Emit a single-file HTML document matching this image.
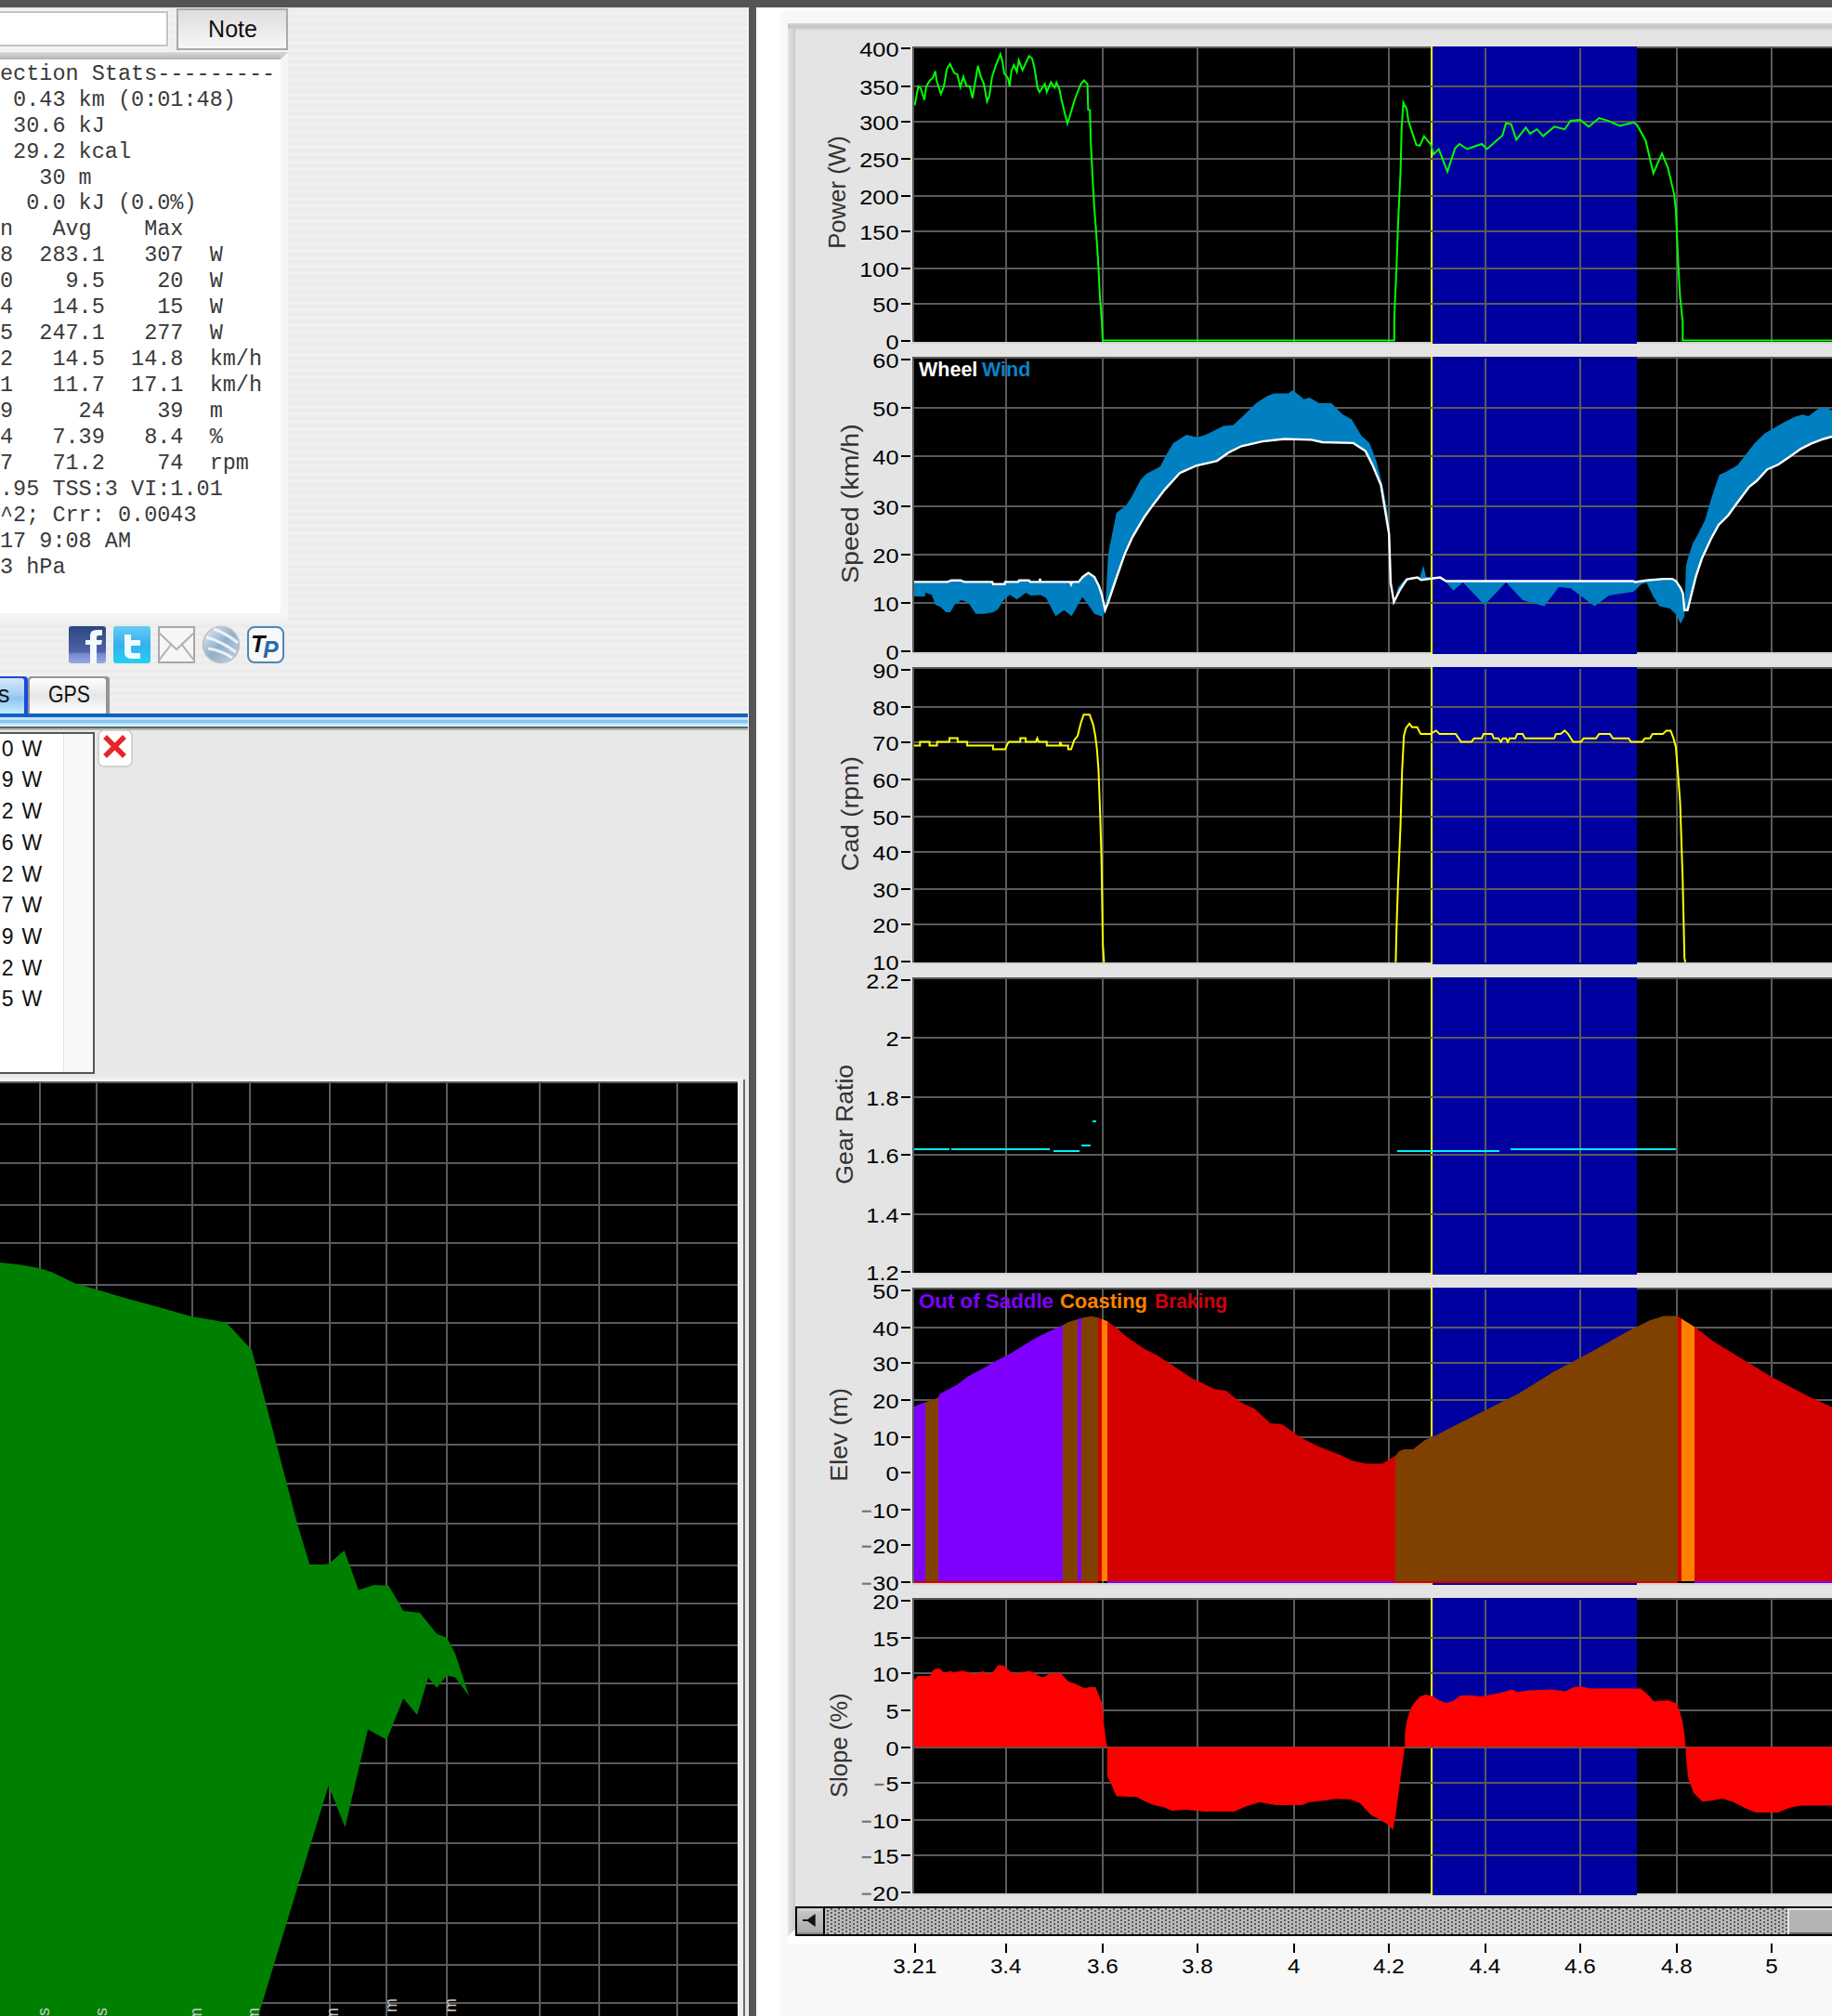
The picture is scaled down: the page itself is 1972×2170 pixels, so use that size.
<!DOCTYPE html>
<html><head><meta charset="utf-8">
<style>
html,body{margin:0;padding:0;}
body{width:1972px;height:2170px;overflow:hidden;position:relative;background:#f8f8f8;}
svg{position:absolute;left:0;top:0;}
text{font-family:"Liberation Sans",sans-serif;}
.mono{font-family:"Liberation Mono",monospace;white-space:pre;}
</style></head><body>
<svg width="1972" height="2170" viewBox="0 0 1972 2170" shape-rendering="crispEdges">
<defs>
<pattern id="stripes" x="0" y="8" width="8" height="8" patternUnits="userSpaceOnUse">
<rect x="0" y="0" width="8" height="4" fill="#ececec"/><rect x="0" y="4" width="8" height="4" fill="#f0f0f0"/>
</pattern>
<pattern id="dots" x="888" y="2054" width="8" height="4" patternUnits="userSpaceOnUse">
<rect x="0" y="0" width="8" height="4" fill="#bababa"/>
<rect x="2" y="2" width="2" height="2" fill="#5a5a5a"/><rect x="6" y="0" width="2" height="2" fill="#5a5a5a"/>
</pattern>
<linearGradient id="gBtn" x1="0" y1="0" x2="0" y2="1"><stop offset="0" stop-color="#dedede"/><stop offset="1" stop-color="#f7f7f7"/></linearGradient>
<linearGradient id="gShadow" x1="0" y1="0" x2="0" y2="1"><stop offset="0" stop-color="#dadada"/><stop offset="1" stop-color="#b2b2b2"/></linearGradient>
<linearGradient id="gTabSel" x1="0" y1="0" x2="0" y2="1"><stop offset="0" stop-color="#d4e8f8"/><stop offset="0.45" stop-color="#a8d0f0"/><stop offset="0.55" stop-color="#90c4ee"/><stop offset="1" stop-color="#c0ecff"/></linearGradient>
<linearGradient id="gTab" x1="0" y1="0" x2="0" y2="1"><stop offset="0" stop-color="#ffffff"/><stop offset="0.5" stop-color="#e6e6e6"/><stop offset="1" stop-color="#ffffff"/></linearGradient>
<linearGradient id="gFb" x1="0" y1="0" x2="0" y2="1"><stop offset="0" stop-color="#2d4680"/><stop offset="0.7" stop-color="#4d64a6"/><stop offset="0.74" stop-color="#7888cc"/><stop offset="1" stop-color="#98a8e4"/></linearGradient>
<linearGradient id="gTw" x1="0" y1="0" x2="0" y2="1"><stop offset="0" stop-color="#66ccf4"/><stop offset="0.5" stop-color="#35b0ee"/><stop offset="1" stop-color="#22d0f0"/></linearGradient>
<linearGradient id="gGlobe" x1="0" y1="0" x2="1" y2="1"><stop offset="0" stop-color="#e8f0f8"/><stop offset="0.5" stop-color="#8eb0cc"/><stop offset="1" stop-color="#c8d4e0"/></linearGradient>
<linearGradient id="gArrowBtn" x1="0" y1="0" x2="0" y2="1"><stop offset="0" stop-color="#c8c8c8"/><stop offset="1" stop-color="#a8a8a8"/></linearGradient>
<linearGradient id="gPanelL" x1="0" y1="0" x2="1" y2="0"><stop offset="0" stop-color="#e6e6e6"/><stop offset="1" stop-color="#c8c8c8"/></linearGradient>
<linearGradient id="gPanelT" x1="0" y1="0" x2="0" y2="1"><stop offset="0" stop-color="#d8d8d8"/><stop offset="0.5" stop-color="#c4c4c4"/><stop offset="1" stop-color="#d6d6d6"/></linearGradient>
</defs>

<rect x="0" y="8" width="806" height="760" fill="url(#stripes)"/>
<rect x="0" y="786" width="806" height="1384" fill="#e8e8e8"/>
<rect x="-10" y="10" width="193" height="43" fill="#f4f4f4"/>
<rect x="-10" y="12" width="191" height="38" fill="#c4c4c4"/>
<rect x="-10" y="14" width="189" height="34" fill="#ffffff"/>
<rect x="190" y="9" width="120" height="45" fill="#aaaaaa"/>
<rect x="192" y="11" width="116" height="41" fill="url(#gBtn)"/>
<text x="250.5" y="39.8" font-size="25" text-anchor="middle" fill="#111">Note</text>
<rect x="-10" y="55" width="320" height="613" fill="#f5f5f5"/>
<rect x="-10" y="56" width="312" height="8" fill="url(#gShadow)"/>
<polygon points="302,56 310,56 302,64" fill="#cfcfcf" shape-rendering="auto"/>
<rect x="-10" y="64" width="312" height="596" fill="#ffffff"/>
<g shape-rendering="auto">
<text class="mono" x="0" y="85.8" font-size="23.5" fill="#3a3a3a">ection Stats---------</text>
<text class="mono" x="0" y="113.7" font-size="23.5" fill="#3a3a3a"> 0.43 km (0:01:48)</text>
<text class="mono" x="0" y="141.7" font-size="23.5" fill="#3a3a3a"> 30.6 kJ</text>
<text class="mono" x="0" y="169.6" font-size="23.5" fill="#3a3a3a"> 29.2 kcal</text>
<text class="mono" x="0" y="197.5" font-size="23.5" fill="#3a3a3a">   30 m</text>
<text class="mono" x="0" y="225.4" font-size="23.5" fill="#3a3a3a">  0.0 kJ (0.0%)</text>
<text class="mono" x="0" y="253.4" font-size="23.5" fill="#3a3a3a">n   Avg    Max</text>
<text class="mono" x="0" y="281.3" font-size="23.5" fill="#3a3a3a">8  283.1   307  W</text>
<text class="mono" x="0" y="309.2" font-size="23.5" fill="#3a3a3a">0    9.5    20  W</text>
<text class="mono" x="0" y="337.2" font-size="23.5" fill="#3a3a3a">4   14.5    15  W</text>
<text class="mono" x="0" y="365.1" font-size="23.5" fill="#3a3a3a">5  247.1   277  W</text>
<text class="mono" x="0" y="393.0" font-size="23.5" fill="#3a3a3a">2   14.5  14.8  km/h</text>
<text class="mono" x="0" y="421.0" font-size="23.5" fill="#3a3a3a">1   11.7  17.1  km/h</text>
<text class="mono" x="0" y="448.9" font-size="23.5" fill="#3a3a3a">9     24    39  m</text>
<text class="mono" x="0" y="476.8" font-size="23.5" fill="#3a3a3a">4   7.39   8.4  %</text>
<text class="mono" x="0" y="504.8" font-size="23.5" fill="#3a3a3a">7   71.2    74  rpm</text>
<text class="mono" x="0" y="532.7" font-size="23.5" fill="#3a3a3a">.95 TSS:3 VI:1.01</text>
<text class="mono" x="0" y="560.6" font-size="23.5" fill="#3a3a3a">^2; Crr: 0.0043</text>
<text class="mono" x="0" y="588.5" font-size="23.5" fill="#3a3a3a">17 9:08 AM</text>
<text class="mono" x="0" y="616.5" font-size="23.5" fill="#3a3a3a">3 hPa</text>
</g>
<g shape-rendering="auto">
<rect x="74" y="674" width="40" height="40" rx="3" fill="url(#gFb)"/>
<path d="M97 714 V694 H92 V689 H97 V684 Q97 678 104 678 H110 V684 H106 Q104 684 104 686 V689 H110 L109 694 H104 V714 Z" fill="#f4f8ff"/>
<rect x="122" y="674" width="40" height="40" rx="3" fill="url(#gTw)"/>
<path d="M134 683 H141 V689 H151 V695 H141 V701 Q141 703 143 703 H151 V709 H141 Q134 709 134 702 Z" fill="#f0fbff"/>
<rect x="171" y="675" width="38" height="38" fill="#f6f6f6" stroke="#a8a8a8" stroke-width="2"/>
<path d="M171 681 L190 699 L209 681 M171 711 L184 694 M209 711 L196 694" fill="none" stroke="#b0b0b0" stroke-width="2"/>
<circle cx="238" cy="694" r="19.5" fill="url(#gGlobe)" stroke="#c0c0c0" stroke-width="1.5"/>
<path d="M222 686 Q238 690 254 702 M224 698 Q238 700 250 708 M230 677 Q244 682 256 692" fill="none" stroke="#ffffff" stroke-width="3" opacity="0.8"/>
<rect x="267" y="675" width="38" height="38" rx="7" fill="#f8f8f8" stroke="#4a88b8" stroke-width="2"/>
<text x="270" y="702" font-size="25" font-weight="bold" font-style="italic" fill="#111">T</text>
<text x="283" y="708" font-size="25" font-weight="bold" font-style="italic" fill="#2a6aa8">P</text>
</g>
<path d="M-4 768 V728 H26 Q30 728 30 732 V768 Z" fill="#1a4ad8" shape-rendering="auto"/>
<path d="M-4 768 V730 H23 Q26 730 26 733 V768 Z" fill="url(#gTabSel)" shape-rendering="auto"/>
<text x="10.5" y="755.8" font-size="26" text-anchor="end" fill="#111">s</text>
<path d="M30 768 V732 Q30 728 34 728 H114 Q118 728 118 732 V768 Z" fill="#959595" shape-rendering="auto"/>
<path d="M32 768 V733 Q32 730 35 730 H111 Q114 730 114 733 V768 Z" fill="url(#gTab)" shape-rendering="auto"/>
<text x="74.5" y="755.8" font-size="26.5" text-anchor="middle" fill="#111" textLength="45" lengthAdjust="spacingAndGlyphs">GPS</text>
<rect x="0" y="768" width="806" height="4" fill="#0f62bf"/>
<rect x="0" y="772" width="806" height="3" fill="#c8e0f6"/>
<rect x="0" y="775" width="806" height="3" fill="#8cc2ee"/>
<rect x="0" y="778" width="806" height="2" fill="#aee0ff"/>
<rect x="0" y="780" width="806" height="2" fill="#d0f6ff"/>
<rect x="0" y="782" width="806" height="2" fill="#646464"/>
<rect x="0" y="784" width="806" height="2" fill="#b4b4b4"/>
<rect x="-10" y="788" width="112" height="368" fill="#555555"/>
<rect x="-10" y="790" width="110" height="364" fill="#ffffff"/>
<rect x="68" y="790" width="32" height="364" fill="#f8f8f8"/>
<rect x="68" y="790" width="1" height="364" fill="#e2e2e2"/>
<g shape-rendering="auto">
<text x="14.5" y="813.7" font-size="23" text-anchor="end" fill="#111">0</text>
<text x="23.5" y="813.7" font-size="23" fill="#111">W</text>
<text x="14.5" y="847.4" font-size="23" text-anchor="end" fill="#111">9</text>
<text x="23.5" y="847.4" font-size="23" fill="#111">W</text>
<text x="14.5" y="881.1" font-size="23" text-anchor="end" fill="#111">2</text>
<text x="23.5" y="881.1" font-size="23" fill="#111">W</text>
<text x="14.5" y="914.8" font-size="23" text-anchor="end" fill="#111">6</text>
<text x="23.5" y="914.8" font-size="23" fill="#111">W</text>
<text x="14.5" y="948.5" font-size="23" text-anchor="end" fill="#111">2</text>
<text x="23.5" y="948.5" font-size="23" fill="#111">W</text>
<text x="14.5" y="982.2" font-size="23" text-anchor="end" fill="#111">7</text>
<text x="23.5" y="982.2" font-size="23" fill="#111">W</text>
<text x="14.5" y="1015.9" font-size="23" text-anchor="end" fill="#111">9</text>
<text x="23.5" y="1015.9" font-size="23" fill="#111">W</text>
<text x="14.5" y="1049.6" font-size="23" text-anchor="end" fill="#111">2</text>
<text x="23.5" y="1049.6" font-size="23" fill="#111">W</text>
<text x="14.5" y="1083.3" font-size="23" text-anchor="end" fill="#111">5</text>
<text x="23.5" y="1083.3" font-size="23" fill="#111">W</text>
</g>
<g shape-rendering="auto">
<rect x="106" y="786" width="36" height="39" rx="6" fill="#ffffff" stroke="#c8c8c8" stroke-width="1.5"/>
<path d="M115 795 L132 812 M132 795 L115 812" stroke="#e8242c" stroke-width="5.5" stroke-linecap="square"/>
</g>
<rect x="0" y="1160" width="800" height="6" fill="#f2f2f2"/>
<rect x="794" y="1160" width="6" height="1010" fill="#efefef"/>
<rect x="800" y="1162" width="2" height="1008" fill="#6a6a6a"/>
<rect x="0" y="1164" width="794" height="2" fill="#5a5a5a"/>
<rect x="0" y="1166" width="794" height="1004" fill="#000"/>
<rect x="41.5" y="1166" width="2" height="1004" fill="#5a5a5a"/>
<rect x="103.3" y="1166" width="2" height="1004" fill="#5a5a5a"/>
<rect x="205.8" y="1166" width="2" height="1004" fill="#5a5a5a"/>
<rect x="267.6" y="1166" width="2" height="1004" fill="#5a5a5a"/>
<rect x="353.5" y="1166" width="2" height="1004" fill="#5a5a5a"/>
<rect x="415.3" y="1166" width="2" height="1004" fill="#5a5a5a"/>
<rect x="479.7" y="1166" width="2" height="1004" fill="#5a5a5a"/>
<rect x="579.6" y="1166" width="2" height="1004" fill="#5a5a5a"/>
<rect x="643.6" y="1166" width="2" height="1004" fill="#5a5a5a"/>
<rect x="727.7" y="1166" width="2" height="1004" fill="#5a5a5a"/>
<rect x="0" y="1209.3" width="794" height="2" fill="#5a5a5a"/>
<rect x="0" y="1251.4" width="794" height="2" fill="#5a5a5a"/>
<rect x="0" y="1295.7" width="794" height="2" fill="#5a5a5a"/>
<rect x="0" y="1337.3" width="794" height="2" fill="#5a5a5a"/>
<rect x="0" y="1381.6" width="794" height="2" fill="#5a5a5a"/>
<rect x="0" y="1423.2" width="794" height="2" fill="#5a5a5a"/>
<rect x="0" y="1467.6" width="794" height="2" fill="#5a5a5a"/>
<rect x="0" y="1509.6" width="794" height="2" fill="#5a5a5a"/>
<rect x="0" y="1554.0" width="794" height="2" fill="#5a5a5a"/>
<rect x="0" y="1595.6" width="794" height="2" fill="#5a5a5a"/>
<rect x="0" y="1639.2" width="794" height="2" fill="#5a5a5a"/>
<rect x="0" y="1683.8" width="794" height="2" fill="#5a5a5a"/>
<rect x="0" y="1725.4" width="794" height="2" fill="#5a5a5a"/>
<rect x="0" y="1769.7" width="794" height="2" fill="#5a5a5a"/>
<rect x="0" y="1811.3" width="794" height="2" fill="#5a5a5a"/>
<rect x="0" y="1855.6" width="794" height="2" fill="#5a5a5a"/>
<rect x="0" y="1897.3" width="794" height="2" fill="#5a5a5a"/>
<rect x="0" y="1941.6" width="794" height="2" fill="#5a5a5a"/>
<rect x="0" y="1983.2" width="794" height="2" fill="#5a5a5a"/>
<rect x="0" y="2027.5" width="794" height="2" fill="#5a5a5a"/>
<rect x="0" y="2069.2" width="794" height="2" fill="#5a5a5a"/>
<rect x="0" y="2113.5" width="794" height="2" fill="#5a5a5a"/>
<rect x="0" y="2155.0" width="794" height="2" fill="#5a5a5a"/>
<polygon points="0.0,1359.0 20.0,1361.0 42.0,1365.0 55.0,1369.0 80.0,1381.0 104.0,1388.0 134.0,1397.0 160.0,1404.0 206.0,1417.0 230.0,1421.0 244.0,1424.0 271.0,1453.0 320.0,1640.0 333.5,1684.8 353.6,1683.4 370.6,1669.0 385.9,1711.6 402.9,1706.0 418.5,1707.0 434.2,1734.0 452.0,1736.0 470.0,1758.6 481.2,1763.0 490.0,1780.0 505.0,1825.8 490.0,1805.6 481.0,1803.4 470.0,1816.8 461.0,1805.6 449.0,1846.0 434.2,1828.0 416.3,1872.8 396.0,1861.6 371.5,1966.8 353.6,1922.0 278.0,2170.0 0.0,2170.0" fill="#008000" shape-rendering="auto"/>
<g fill="#c8c8c8" shape-rendering="auto">
<text x="53" y="2170" font-size="18" transform="rotate(-90 53 2170)">s</text>
<text x="115" y="2170" font-size="18" transform="rotate(-90 115 2170)">s</text>
<text x="217" y="2176" font-size="18" transform="rotate(-90 217 2176)">m</text>
<text x="279" y="2176" font-size="18" transform="rotate(-90 279 2176)">m</text>
<text x="364" y="2176" font-size="18" transform="rotate(-90 364 2176)">m</text>
<text x="427" y="2166" font-size="18" transform="rotate(-90 427 2166)">m</text>
<text x="491" y="2166" font-size="18" transform="rotate(-90 491 2166)">m</text>
</g>
<rect x="0" y="0" width="1972" height="8" fill="#545454"/>
<rect x="805" y="8" width="1" height="2162" fill="#fafafa"/>
<rect x="806" y="8" width="8" height="2162" fill="#555555"/>
<rect x="814" y="8" width="1158" height="2162" fill="#ffffff"/>
<rect x="840" y="12" width="1132" height="2158" fill="#f8f8f8"/>
<rect x="848" y="25" width="1124" height="2059" fill="#e4e4e4"/>
<rect x="848" y="25" width="8" height="2059" fill="url(#gPanelL)"/>
<rect x="848" y="25" width="1124" height="7" fill="url(#gPanelT)"/>
<polygon points="848,2084 856,2076 856,2084" fill="#ffffff"/>
<rect x="848" y="2084" width="1124" height="8" fill="#ffffff"/>
<rect x="982" y="367.8" width="990" height="2" fill="#d4d4d4"/>
<rect x="982" y="50.4" width="990" height="2" fill="#5a5a5a"/>
<rect x="982" y="50.4" width="2" height="317.4" fill="#5a5a5a"/>
<rect x="984" y="52.4" width="988" height="315.4" fill="#000"/>
<rect x="1541.5" y="50.4" width="220.5" height="319.4" fill="#0000a0"/>
<rect x="1540" y="50.4" width="2" height="319.4" fill="#ffff00"/>
<rect x="1081.7" y="52.4" width="2" height="315.4" fill="#5a5a5a"/>
<rect x="1185.8" y="52.4" width="2" height="315.4" fill="#5a5a5a"/>
<rect x="1287.9" y="52.4" width="2" height="315.4" fill="#5a5a5a"/>
<rect x="1391.8" y="52.4" width="2" height="315.4" fill="#5a5a5a"/>
<rect x="1493.8" y="52.4" width="2" height="315.4" fill="#5a5a5a"/>
<rect x="1597.5" y="52.4" width="2" height="315.4" fill="#5a5a5a"/>
<rect x="1699.9" y="52.4" width="2" height="315.4" fill="#5a5a5a"/>
<rect x="1803.9" y="52.4" width="2" height="315.4" fill="#5a5a5a"/>
<rect x="1905.9" y="52.4" width="2" height="315.4" fill="#5a5a5a"/>
<rect x="984" y="91.8" width="988" height="2" fill="#5a5a5a"/>
<rect x="984" y="129.8" width="988" height="2" fill="#5a5a5a"/>
<rect x="984" y="169.7" width="988" height="2" fill="#5a5a5a"/>
<rect x="984" y="209.8" width="988" height="2" fill="#5a5a5a"/>
<rect x="984" y="247.7" width="988" height="2" fill="#5a5a5a"/>
<rect x="984" y="287.9" width="988" height="2" fill="#5a5a5a"/>
<rect x="984" y="325.8" width="988" height="2" fill="#5a5a5a"/>
<rect x="970" y="51.4" width="10" height="2" fill="#000"/>
<rect x="970" y="91.8" width="10" height="2" fill="#000"/>
<rect x="970" y="129.8" width="10" height="2" fill="#000"/>
<rect x="970" y="169.7" width="10" height="2" fill="#000"/>
<rect x="970" y="209.8" width="10" height="2" fill="#000"/>
<rect x="970" y="247.7" width="10" height="2" fill="#000"/>
<rect x="970" y="287.9" width="10" height="2" fill="#000"/>
<rect x="970" y="325.8" width="10" height="2" fill="#000"/>
<rect x="970" y="366.2" width="10" height="2" fill="#000"/>
<text x="0" y="0" font-size="26" text-anchor="middle" fill="#333" transform="translate(909.9 207.0) rotate(-90)" textLength="121.7" lengthAdjust="spacingAndGlyphs" shape-rendering="auto">Power (W)</text>
<rect x="982" y="701.6" width="990" height="2" fill="#d4d4d4"/>
<rect x="982" y="384.2" width="990" height="2" fill="#5a5a5a"/>
<rect x="982" y="384.2" width="2" height="317.4" fill="#5a5a5a"/>
<rect x="984" y="386.2" width="988" height="315.4" fill="#000"/>
<rect x="1541.5" y="384.2" width="220.5" height="319.4" fill="#0000a0"/>
<rect x="1540" y="384.2" width="2" height="319.4" fill="#ffff00"/>
<rect x="1081.7" y="386.2" width="2" height="315.4" fill="#5a5a5a"/>
<rect x="1185.8" y="386.2" width="2" height="315.4" fill="#5a5a5a"/>
<rect x="1287.9" y="386.2" width="2" height="315.4" fill="#5a5a5a"/>
<rect x="1391.8" y="386.2" width="2" height="315.4" fill="#5a5a5a"/>
<rect x="1493.8" y="386.2" width="2" height="315.4" fill="#5a5a5a"/>
<rect x="1597.5" y="386.2" width="2" height="315.4" fill="#5a5a5a"/>
<rect x="1699.9" y="386.2" width="2" height="315.4" fill="#5a5a5a"/>
<rect x="1803.9" y="386.2" width="2" height="315.4" fill="#5a5a5a"/>
<rect x="1905.9" y="386.2" width="2" height="315.4" fill="#5a5a5a"/>
<rect x="984" y="437.6" width="988" height="2" fill="#5a5a5a"/>
<rect x="984" y="489.8" width="988" height="2" fill="#5a5a5a"/>
<rect x="984" y="543.6" width="988" height="2" fill="#5a5a5a"/>
<rect x="984" y="596.0" width="988" height="2" fill="#5a5a5a"/>
<rect x="984" y="648.0" width="988" height="2" fill="#5a5a5a"/>
<rect x="970" y="385.6" width="10" height="2" fill="#000"/>
<rect x="970" y="437.6" width="10" height="2" fill="#000"/>
<rect x="970" y="489.8" width="10" height="2" fill="#000"/>
<rect x="970" y="543.6" width="10" height="2" fill="#000"/>
<rect x="970" y="596.0" width="10" height="2" fill="#000"/>
<rect x="970" y="648.0" width="10" height="2" fill="#000"/>
<rect x="970" y="700.3" width="10" height="2" fill="#000"/>
<text x="0" y="0" font-size="26" text-anchor="middle" fill="#333" transform="translate(924.1 542.2) rotate(-90)" textLength="171.8" lengthAdjust="spacingAndGlyphs" shape-rendering="auto">Speed (km/h)</text>
<rect x="982" y="1035.8" width="990" height="2" fill="#d4d4d4"/>
<rect x="982" y="718.0" width="990" height="2" fill="#5a5a5a"/>
<rect x="982" y="718.0" width="2" height="317.8" fill="#5a5a5a"/>
<rect x="984" y="720.0" width="988" height="315.8" fill="#000"/>
<rect x="1541.5" y="718.0" width="220.5" height="319.8" fill="#0000a0"/>
<rect x="1540" y="718.0" width="2" height="319.8" fill="#ffff00"/>
<rect x="1081.7" y="720.0" width="2" height="315.8" fill="#5a5a5a"/>
<rect x="1185.8" y="720.0" width="2" height="315.8" fill="#5a5a5a"/>
<rect x="1287.9" y="720.0" width="2" height="315.8" fill="#5a5a5a"/>
<rect x="1391.8" y="720.0" width="2" height="315.8" fill="#5a5a5a"/>
<rect x="1493.8" y="720.0" width="2" height="315.8" fill="#5a5a5a"/>
<rect x="1597.5" y="720.0" width="2" height="315.8" fill="#5a5a5a"/>
<rect x="1699.9" y="720.0" width="2" height="315.8" fill="#5a5a5a"/>
<rect x="1803.9" y="720.0" width="2" height="315.8" fill="#5a5a5a"/>
<rect x="1905.9" y="720.0" width="2" height="315.8" fill="#5a5a5a"/>
<rect x="984" y="760.0" width="988" height="2" fill="#5a5a5a"/>
<rect x="984" y="797.9" width="988" height="2" fill="#5a5a5a"/>
<rect x="984" y="837.7" width="988" height="2" fill="#5a5a5a"/>
<rect x="984" y="877.7" width="988" height="2" fill="#5a5a5a"/>
<rect x="984" y="916.1" width="988" height="2" fill="#5a5a5a"/>
<rect x="984" y="956.0" width="988" height="2" fill="#5a5a5a"/>
<rect x="984" y="994.1" width="988" height="2" fill="#5a5a5a"/>
<rect x="970" y="719.5" width="10" height="2" fill="#000"/>
<rect x="970" y="760.0" width="10" height="2" fill="#000"/>
<rect x="970" y="797.9" width="10" height="2" fill="#000"/>
<rect x="970" y="837.7" width="10" height="2" fill="#000"/>
<rect x="970" y="877.7" width="10" height="2" fill="#000"/>
<rect x="970" y="916.1" width="10" height="2" fill="#000"/>
<rect x="970" y="956.0" width="10" height="2" fill="#000"/>
<rect x="970" y="994.1" width="10" height="2" fill="#000"/>
<rect x="970" y="1033.9" width="10" height="2" fill="#000"/>
<text x="0" y="0" font-size="26" text-anchor="middle" fill="#333" transform="translate(924.1 875.9) rotate(-90)" textLength="123.5" lengthAdjust="spacingAndGlyphs" shape-rendering="auto">Cad (rpm)</text>
<rect x="982" y="1369.7" width="990" height="2" fill="#d4d4d4"/>
<rect x="982" y="1051.9" width="990" height="2" fill="#5a5a5a"/>
<rect x="982" y="1051.9" width="2" height="317.8" fill="#5a5a5a"/>
<rect x="984" y="1053.9" width="988" height="315.8" fill="#000"/>
<rect x="1541.5" y="1051.9" width="220.5" height="319.8" fill="#0000a0"/>
<rect x="1540" y="1051.9" width="2" height="319.8" fill="#ffff00"/>
<rect x="1081.7" y="1053.9" width="2" height="315.8" fill="#5a5a5a"/>
<rect x="1185.8" y="1053.9" width="2" height="315.8" fill="#5a5a5a"/>
<rect x="1287.9" y="1053.9" width="2" height="315.8" fill="#5a5a5a"/>
<rect x="1391.8" y="1053.9" width="2" height="315.8" fill="#5a5a5a"/>
<rect x="1493.8" y="1053.9" width="2" height="315.8" fill="#5a5a5a"/>
<rect x="1597.5" y="1053.9" width="2" height="315.8" fill="#5a5a5a"/>
<rect x="1699.9" y="1053.9" width="2" height="315.8" fill="#5a5a5a"/>
<rect x="1803.9" y="1053.9" width="2" height="315.8" fill="#5a5a5a"/>
<rect x="1905.9" y="1053.9" width="2" height="315.8" fill="#5a5a5a"/>
<rect x="984" y="1115.8" width="988" height="2" fill="#5a5a5a"/>
<rect x="984" y="1179.5" width="988" height="2" fill="#5a5a5a"/>
<rect x="984" y="1241.8" width="988" height="2" fill="#5a5a5a"/>
<rect x="984" y="1305.6" width="988" height="2" fill="#5a5a5a"/>
<rect x="970" y="1053.8" width="10" height="2" fill="#000"/>
<rect x="970" y="1115.8" width="10" height="2" fill="#000"/>
<rect x="970" y="1179.5" width="10" height="2" fill="#000"/>
<rect x="970" y="1241.8" width="10" height="2" fill="#000"/>
<rect x="970" y="1305.6" width="10" height="2" fill="#000"/>
<rect x="970" y="1367.6" width="10" height="2" fill="#000"/>
<text x="0" y="0" font-size="26" text-anchor="middle" fill="#333" transform="translate(918.4 1210.3) rotate(-90)" textLength="129.0" lengthAdjust="spacingAndGlyphs" shape-rendering="auto">Gear Ratio</text>
<rect x="982" y="1703.6" width="990" height="2" fill="#d4d4d4"/>
<rect x="982" y="1385.8" width="990" height="2" fill="#5a5a5a"/>
<rect x="982" y="1385.8" width="2" height="317.8" fill="#5a5a5a"/>
<rect x="984" y="1387.8" width="988" height="315.8" fill="#000"/>
<rect x="1541.5" y="1385.8" width="220.5" height="319.8" fill="#0000a0"/>
<rect x="1540" y="1385.8" width="2" height="319.8" fill="#ffff00"/>
<rect x="1081.7" y="1387.8" width="2" height="315.8" fill="#5a5a5a"/>
<rect x="1185.8" y="1387.8" width="2" height="315.8" fill="#5a5a5a"/>
<rect x="1287.9" y="1387.8" width="2" height="315.8" fill="#5a5a5a"/>
<rect x="1391.8" y="1387.8" width="2" height="315.8" fill="#5a5a5a"/>
<rect x="1493.8" y="1387.8" width="2" height="315.8" fill="#5a5a5a"/>
<rect x="1597.5" y="1387.8" width="2" height="315.8" fill="#5a5a5a"/>
<rect x="1699.9" y="1387.8" width="2" height="315.8" fill="#5a5a5a"/>
<rect x="1803.9" y="1387.8" width="2" height="315.8" fill="#5a5a5a"/>
<rect x="1905.9" y="1387.8" width="2" height="315.8" fill="#5a5a5a"/>
<rect x="984" y="1427.8" width="988" height="2" fill="#5a5a5a"/>
<rect x="984" y="1465.7" width="988" height="2" fill="#5a5a5a"/>
<rect x="984" y="1505.7" width="988" height="2" fill="#5a5a5a"/>
<rect x="984" y="1545.7" width="988" height="2" fill="#5a5a5a"/>
<rect x="984" y="1583.7" width="988" height="2" fill="#5a5a5a"/>
<rect x="984" y="1623.7" width="988" height="2" fill="#5a5a5a"/>
<rect x="984" y="1661.6" width="988" height="2" fill="#5a5a5a"/>
<rect x="970" y="1387.6" width="10" height="2" fill="#000"/>
<rect x="970" y="1427.8" width="10" height="2" fill="#000"/>
<rect x="970" y="1465.7" width="10" height="2" fill="#000"/>
<rect x="970" y="1505.7" width="10" height="2" fill="#000"/>
<rect x="970" y="1545.7" width="10" height="2" fill="#000"/>
<rect x="970" y="1583.7" width="10" height="2" fill="#000"/>
<rect x="970" y="1623.7" width="10" height="2" fill="#000"/>
<rect x="970" y="1661.6" width="10" height="2" fill="#000"/>
<rect x="970" y="1701.6" width="10" height="2" fill="#000"/>
<text x="0" y="0" font-size="26" text-anchor="middle" fill="#333" transform="translate(911.9 1544.4) rotate(-90)" textLength="100.9" lengthAdjust="spacingAndGlyphs" shape-rendering="auto">Elev (m)</text>
<rect x="982" y="2037.5" width="990" height="2" fill="#d4d4d4"/>
<rect x="982" y="1719.6" width="990" height="2" fill="#5a5a5a"/>
<rect x="982" y="1719.6" width="2" height="317.9" fill="#5a5a5a"/>
<rect x="984" y="1721.6" width="988" height="315.9" fill="#000"/>
<rect x="1541.5" y="1719.6" width="220.5" height="319.9" fill="#0000a0"/>
<rect x="1540" y="1719.6" width="2" height="319.9" fill="#ffff00"/>
<rect x="1081.7" y="1721.6" width="2" height="315.9" fill="#5a5a5a"/>
<rect x="1185.8" y="1721.6" width="2" height="315.9" fill="#5a5a5a"/>
<rect x="1287.9" y="1721.6" width="2" height="315.9" fill="#5a5a5a"/>
<rect x="1391.8" y="1721.6" width="2" height="315.9" fill="#5a5a5a"/>
<rect x="1493.8" y="1721.6" width="2" height="315.9" fill="#5a5a5a"/>
<rect x="1597.5" y="1721.6" width="2" height="315.9" fill="#5a5a5a"/>
<rect x="1699.9" y="1721.6" width="2" height="315.9" fill="#5a5a5a"/>
<rect x="1803.9" y="1721.6" width="2" height="315.9" fill="#5a5a5a"/>
<rect x="1905.9" y="1721.6" width="2" height="315.9" fill="#5a5a5a"/>
<rect x="984" y="1761.9" width="988" height="2" fill="#5a5a5a"/>
<rect x="984" y="1800.0" width="988" height="2" fill="#5a5a5a"/>
<rect x="984" y="1840.1" width="988" height="2" fill="#5a5a5a"/>
<rect x="984" y="1879.8" width="988" height="2" fill="#5a5a5a"/>
<rect x="984" y="1917.8" width="988" height="2" fill="#5a5a5a"/>
<rect x="984" y="1957.7" width="988" height="2" fill="#5a5a5a"/>
<rect x="984" y="1996.0" width="988" height="2" fill="#5a5a5a"/>
<rect x="970" y="1721.7" width="10" height="2" fill="#000"/>
<rect x="970" y="1761.9" width="10" height="2" fill="#000"/>
<rect x="970" y="1800.0" width="10" height="2" fill="#000"/>
<rect x="970" y="1840.1" width="10" height="2" fill="#000"/>
<rect x="970" y="1879.8" width="10" height="2" fill="#000"/>
<rect x="970" y="1917.8" width="10" height="2" fill="#000"/>
<rect x="970" y="1957.7" width="10" height="2" fill="#000"/>
<rect x="970" y="1996.0" width="10" height="2" fill="#000"/>
<rect x="970" y="2035.6" width="10" height="2" fill="#000"/>
<text x="0" y="0" font-size="26" text-anchor="middle" fill="#333" transform="translate(912.3 1878.8) rotate(-90)" textLength="112.6" lengthAdjust="spacingAndGlyphs" shape-rendering="auto">Slope (%)</text>
<g shape-rendering="auto" fill="#000">
<text x="0" y="0" font-size="22" text-anchor="end" transform="translate(967.5 61.4) scale(1.15 1)">400</text>
<text x="0" y="0" font-size="22" text-anchor="end" transform="translate(967.5 101.8) scale(1.15 1)">350</text>
<text x="0" y="0" font-size="22" text-anchor="end" transform="translate(967.5 139.8) scale(1.15 1)">300</text>
<text x="0" y="0" font-size="22" text-anchor="end" transform="translate(967.5 179.7) scale(1.15 1)">250</text>
<text x="0" y="0" font-size="22" text-anchor="end" transform="translate(967.5 219.8) scale(1.15 1)">200</text>
<text x="0" y="0" font-size="22" text-anchor="end" transform="translate(967.5 257.7) scale(1.15 1)">150</text>
<text x="0" y="0" font-size="22" text-anchor="end" transform="translate(967.5 297.9) scale(1.15 1)">100</text>
<text x="0" y="0" font-size="22" text-anchor="end" transform="translate(967.5 335.8) scale(1.15 1)">50</text>
<text x="0" y="0" font-size="22" text-anchor="end" transform="translate(967.5 376.2) scale(1.15 1)">0</text>
<text x="0" y="0" font-size="22" text-anchor="end" transform="translate(967.5 395.6) scale(1.15 1)">60</text>
<text x="0" y="0" font-size="22" text-anchor="end" transform="translate(967.5 447.6) scale(1.15 1)">50</text>
<text x="0" y="0" font-size="22" text-anchor="end" transform="translate(967.5 499.8) scale(1.15 1)">40</text>
<text x="0" y="0" font-size="22" text-anchor="end" transform="translate(967.5 553.6) scale(1.15 1)">30</text>
<text x="0" y="0" font-size="22" text-anchor="end" transform="translate(967.5 606.0) scale(1.15 1)">20</text>
<text x="0" y="0" font-size="22" text-anchor="end" transform="translate(967.5 658.0) scale(1.15 1)">10</text>
<text x="0" y="0" font-size="22" text-anchor="end" transform="translate(967.5 710.3) scale(1.15 1)">0</text>
<text x="0" y="0" font-size="22" text-anchor="end" transform="translate(967.5 729.5) scale(1.15 1)">90</text>
<text x="0" y="0" font-size="22" text-anchor="end" transform="translate(967.5 770.0) scale(1.15 1)">80</text>
<text x="0" y="0" font-size="22" text-anchor="end" transform="translate(967.5 807.9) scale(1.15 1)">70</text>
<text x="0" y="0" font-size="22" text-anchor="end" transform="translate(967.5 847.7) scale(1.15 1)">60</text>
<text x="0" y="0" font-size="22" text-anchor="end" transform="translate(967.5 887.7) scale(1.15 1)">50</text>
<text x="0" y="0" font-size="22" text-anchor="end" transform="translate(967.5 926.1) scale(1.15 1)">40</text>
<text x="0" y="0" font-size="22" text-anchor="end" transform="translate(967.5 966.0) scale(1.15 1)">30</text>
<text x="0" y="0" font-size="22" text-anchor="end" transform="translate(967.5 1004.1) scale(1.15 1)">20</text>
<text x="0" y="0" font-size="22" text-anchor="end" transform="translate(967.5 1043.9) scale(1.15 1)">10</text>
<text x="0" y="0" font-size="22" text-anchor="end" transform="translate(967.5 1063.8) scale(1.15 1)">2.2</text>
<text x="0" y="0" font-size="22" text-anchor="end" transform="translate(967.5 1125.8) scale(1.15 1)">2</text>
<text x="0" y="0" font-size="22" text-anchor="end" transform="translate(967.5 1189.5) scale(1.15 1)">1.8</text>
<text x="0" y="0" font-size="22" text-anchor="end" transform="translate(967.5 1251.8) scale(1.15 1)">1.6</text>
<text x="0" y="0" font-size="22" text-anchor="end" transform="translate(967.5 1315.6) scale(1.15 1)">1.4</text>
<text x="0" y="0" font-size="22" text-anchor="end" transform="translate(967.5 1377.6) scale(1.15 1)">1.2</text>
<text x="0" y="0" font-size="22" text-anchor="end" transform="translate(967.5 1397.6) scale(1.15 1)">50</text>
<text x="0" y="0" font-size="22" text-anchor="end" transform="translate(967.5 1437.8) scale(1.15 1)">40</text>
<text x="0" y="0" font-size="22" text-anchor="end" transform="translate(967.5 1475.7) scale(1.15 1)">30</text>
<text x="0" y="0" font-size="22" text-anchor="end" transform="translate(967.5 1515.7) scale(1.15 1)">20</text>
<text x="0" y="0" font-size="22" text-anchor="end" transform="translate(967.5 1555.7) scale(1.15 1)">10</text>
<text x="0" y="0" font-size="22" text-anchor="end" transform="translate(967.5 1593.7) scale(1.15 1)">0</text>
<text x="0" y="0" font-size="22" text-anchor="end" transform="translate(967.5 1633.7) scale(1.15 1)">10</text>
<rect x="927.8" y="1625.7" width="10" height="2.2" fill="#777"/>
<text x="0" y="0" font-size="22" text-anchor="end" transform="translate(967.5 1671.6) scale(1.15 1)">20</text>
<rect x="927.8" y="1663.6" width="10" height="2.2" fill="#777"/>
<text x="0" y="0" font-size="22" text-anchor="end" transform="translate(967.5 1711.6) scale(1.15 1)">30</text>
<rect x="927.8" y="1703.6" width="10" height="2.2" fill="#777"/>
<text x="0" y="0" font-size="22" text-anchor="end" transform="translate(967.5 1731.7) scale(1.15 1)">20</text>
<text x="0" y="0" font-size="22" text-anchor="end" transform="translate(967.5 1771.9) scale(1.15 1)">15</text>
<text x="0" y="0" font-size="22" text-anchor="end" transform="translate(967.5 1810.0) scale(1.15 1)">10</text>
<text x="0" y="0" font-size="22" text-anchor="end" transform="translate(967.5 1850.1) scale(1.15 1)">5</text>
<text x="0" y="0" font-size="22" text-anchor="end" transform="translate(967.5 1889.8) scale(1.15 1)">0</text>
<text x="0" y="0" font-size="22" text-anchor="end" transform="translate(967.5 1927.8) scale(1.15 1)">5</text>
<rect x="941.4" y="1919.8" width="10" height="2.2" fill="#777"/>
<text x="0" y="0" font-size="22" text-anchor="end" transform="translate(967.5 1967.7) scale(1.15 1)">10</text>
<rect x="927.8" y="1959.7" width="10" height="2.2" fill="#777"/>
<text x="0" y="0" font-size="22" text-anchor="end" transform="translate(967.5 2006.0) scale(1.15 1)">15</text>
<rect x="927.8" y="1998.0" width="10" height="2.2" fill="#777"/>
<text x="0" y="0" font-size="22" text-anchor="end" transform="translate(967.5 2045.6) scale(1.15 1)">20</text>
<rect x="927.8" y="2037.6" width="10" height="2.2" fill="#777"/>
</g>
<clipPath id="clip0"><rect x="984" y="52.4" width="988" height="315.4"/></clipPath>
<clipPath id="clip1"><rect x="984" y="386.2" width="988" height="315.4"/></clipPath>
<clipPath id="clip2"><rect x="984" y="720.0" width="988" height="315.8"/></clipPath>
<clipPath id="clip3"><rect x="984" y="1053.9" width="988" height="315.8"/></clipPath>
<clipPath id="clip4"><rect x="984" y="1387.8" width="988" height="315.8"/></clipPath>
<clipPath id="clip5"><rect x="984" y="1721.6" width="988" height="315.9"/></clipPath>
<polyline points="984.6,113.4 988.5,93.0 991.1,95.0 995.0,107.5 997.0,93.0 1001.0,86.5 1004.0,84.0 1006.9,76.7 1008.0,86.0 1012.8,101.0 1016.0,93.0 1019.3,74.0 1022.6,68.8 1027.2,78.6 1030.5,80.0 1033.7,93.7 1037.0,82.6 1040.3,92.4 1044.0,93.0 1046.8,105.5 1052.7,70.8 1055.5,82.0 1059.0,90.0 1062.5,109.4 1065.0,103.0 1067.8,83.2 1072.0,70.0 1076.9,58.3 1079.0,66.0 1081.0,79.0 1085.0,84.0 1086.8,93.0 1088.7,76.7 1091.4,70.1 1094.6,77.4 1096.6,64.9 1100.6,75.4 1107.7,60.3 1111.0,63.0 1113.6,73.4 1116.9,95.0 1118.9,99.0 1124.8,90.4 1126.8,99.0 1131.3,88.5 1135.2,94.4 1137.2,89.0 1140.5,96.3 1142.5,107.0 1145.7,120.0 1149.0,133.0 1151.6,125.0 1156.9,107.0 1163.4,90.4 1166.7,86.5 1170.6,90.4 1171.3,118.0 1173.2,118.6 1174.0,150.0 1176.0,190.0 1178.0,225.0 1180.0,250.0 1182.0,280.0 1184.0,320.0 1186.0,345.0 1187.0,366.5 1500.8,366.5 1500.8,342.4 1503.2,289.5 1505.0,238.5 1507.5,186.5 1508.8,136.4 1510.6,110.4 1514.3,117.8 1516.0,130.0 1524.5,155.9 1528.3,156.8 1532.9,146.6 1540.3,155.9 1543.1,166.1 1548.7,160.5 1558.0,184.7 1566.3,159.6 1571.0,155.0 1579.3,160.5 1586.7,157.7 1595.0,155.0 1600.6,160.5 1609.9,152.2 1617.3,145.7 1621.0,132.7 1626.6,133.6 1632.2,150.3 1642.4,137.3 1647.0,143.8 1654.5,139.2 1661.0,146.6 1673.0,136.4 1684.2,139.2 1690.7,129.9 1700.9,129.0 1710.1,136.4 1721.3,127.1 1730.6,129.9 1743.6,135.5 1758.4,131.8 1762.1,134.5 1771.4,151.2 1779.7,186.5 1789.0,165.2 1795.5,181.0 1802.0,208.8 1803.9,225.5 1806.7,288.6 1808.5,320.1 1811.3,346.1 1811.3,366.5 1972.0,366.5" fill="none" stroke="#00ff00" stroke-width="2" clip-path="url(#clip0)" shape-rendering="auto"/>
<g clip-path="url(#clip1)" shape-rendering="auto">
<polygon points="984.0,642.0 995.6,642.0 996.4,637.9 1002.9,640.3 1007.0,651.0 1012.0,653.0 1018.5,659.1 1023.0,659.1 1027.5,651.0 1034.8,646.0 1042.2,648.5 1050.4,660.8 1059.4,660.8 1069.2,659.1 1074.0,656.0 1081.5,644.4 1087.2,640.3 1094.6,645.2 1104.4,637.9 1109.3,641.1 1120.0,640.5 1126.0,643.5 1136.3,663.2 1145.4,656.7 1153.5,663.2 1165.0,642.8 1171.5,651.0 1178.1,660.8 1187.1,664.1 1189.6,656.7 1192.8,597.8 1194.5,588.0 1200.2,560.1 1201.7,552.0 1212.2,544.1 1218.3,534.5 1227.9,516.2 1234.0,510.0 1248.9,502.2 1254.1,491.7 1262.9,476.9 1276.9,468.1 1289.1,470.7 1297.8,468.1 1317.0,458.5 1327.5,457.6 1339.7,446.3 1352.0,434.1 1364.2,426.2 1371.2,423.6 1386.9,423.6 1391.3,420.1 1398.3,425.3 1403.5,429.7 1409.6,428.0 1420.1,434.1 1433.2,434.1 1444.5,445.4 1455.0,451.5 1465.5,469.0 1474.2,476.9 1481.2,495.2 1488.2,522.3 1493.4,550.2 1496.9,592.1 1497.5,627.0 1500.4,648.0 1505.0,632.0 1512.0,624.0 1520.0,621.0 1528.3,621.6 1532.2,608.7 1535.0,621.0 1550.0,621.6 1556.7,626.7 1564.4,635.8 1574.7,626.7 1597.9,651.2 1621.1,626.7 1639.1,646.0 1662.3,652.5 1677.8,631.9 1690.7,633.2 1716.4,652.5 1731.9,640.9 1757.7,637.0 1760.0,635.4 1766.5,628.9 1772.3,627.2 1779.6,642.0 1786.2,652.6 1797.7,655.0 1804.2,661.6 1809.1,671.4 1813.2,663.2 1813.8,640.0 1814.8,609.2 1817.3,599.4 1822.2,584.7 1827.9,574.8 1835.3,560.1 1841.9,537.2 1846.8,522.4 1850.9,511.0 1858.2,507.7 1869.7,501.2 1877.9,491.3 1887.7,478.2 1899.2,466.8 1907.4,461.9 1920.4,454.5 1931.9,448.8 1940.1,446.3 1946.6,447.9 1956.5,440.6 1963.0,438.1 1972.0,441.4 1972.0,470.0 1963.0,472.5 1949.9,477.4 1938.5,483.1 1927.0,491.3 1913.9,500.3 1902.4,505.2 1891.0,517.5 1882.8,524.1 1868.1,543.7 1859.9,555.2 1850.0,565.0 1841.9,579.7 1832.0,601.0 1825.5,620.7 1820.6,640.3 1816.5,656.7 1813.2,656.7 1811.6,638.7 1809.1,633.0 1804.2,625.6 1800.1,623.1 1790.3,623.1 1772.3,624.8 1760.0,626.4 1757.7,625.5 1556.7,625.5 1550.2,621.6 1529.6,624.2 1525.8,621.6 1514.4,623.6 1507.4,634.0 1500.4,648.0 1496.9,627.0 1495.2,574.7 1486.5,522.3 1477.7,501.3 1469.9,485.6 1456.8,476.9 1423.6,476.0 1411.4,473.4 1382.5,472.5 1359.0,475.1 1336.2,480.3 1322.3,487.3 1310.0,496.1 1287.3,501.3 1269.9,509.2 1254.1,526.6 1241.9,542.4 1232.1,556.0 1219.0,578.1 1210.8,596.1 1201.0,624.0 1192.8,648.5 1189.6,656.7 1186.0,640.0 1183.0,631.0 1178.0,621.0 1171.5,616.6 1165.5,621.0 1161.0,626.4 1154.0,626.4 1153.0,629.0 1152.0,626.4 1120.0,626.4 1119.5,623.0 1119.0,626.4 1109.0,626.4 1107.7,624.7 1097.0,624.7 1096.0,626.4 1082.0,626.4 1081.5,628.8 1069.0,628.8 1068.0,626.4 1038.0,626.4 1034.0,624.7 1024.0,624.7 1020.0,626.4 984.0,626.4" fill="#0080c0"/>
<polyline points="984.0,626.4 1020.0,626.4 1024.0,624.7 1034.0,624.7 1038.0,626.4 1068.0,626.4 1069.0,628.8 1081.5,628.8 1082.0,626.4 1096.0,626.4 1097.0,624.7 1107.7,624.7 1109.0,626.4 1119.0,626.4 1119.5,623.0 1120.0,626.4 1152.0,626.4 1153.0,629.0 1154.0,626.4 1161.0,626.4 1165.5,621.0 1171.5,616.6 1178.0,621.0 1183.0,631.0 1186.0,640.0 1189.6,656.7 1192.8,648.5 1201.0,624.0 1210.8,596.1 1219.0,578.1 1232.1,556.0 1241.9,542.4 1254.1,526.6 1269.9,509.2 1287.3,501.3 1310.0,496.1 1322.3,487.3 1336.2,480.3 1359.0,475.1 1382.5,472.5 1411.4,473.4 1423.6,476.0 1456.8,476.9 1469.9,485.6 1477.7,501.3 1486.5,522.3 1495.2,574.7 1496.9,627.0 1500.4,648.0 1507.4,634.0 1514.4,623.6 1525.8,621.6 1529.6,624.2 1550.2,621.6 1556.7,625.5 1757.7,625.5 1760.0,626.4 1772.3,624.8 1790.3,623.1 1800.1,623.1 1804.2,625.6 1809.1,633.0 1811.6,638.7 1813.2,656.7 1816.5,656.7 1820.6,640.3 1825.5,620.7 1832.0,601.0 1841.9,579.7 1850.0,565.0 1859.9,555.2 1868.1,543.7 1882.8,524.1 1891.0,517.5 1902.4,505.2 1913.9,500.3 1927.0,491.3 1938.5,483.1 1949.9,477.4 1963.0,472.5 1972.0,470.0" fill="none" stroke="#ffffff" stroke-width="2.4"/>
</g>
<text x="989" y="405.4" font-size="21.5" font-weight="bold" fill="#ffffff" shape-rendering="auto">Wheel</text>
<text x="1057" y="405.4" font-size="21.5" font-weight="bold" fill="#0a84c8" shape-rendering="auto">Wind</text>
<g clip-path="url(#clip2)" shape-rendering="auto" fill="none" stroke="#ffff00" stroke-width="2">
<polyline points="984.0,802.5 990.3,802.5 990.3,798.6 1000.6,798.6 1000.6,802.5 1008.6,802.5 1008.6,798.6 1022.0,798.6 1022.0,794.6 1030.8,794.6 1030.8,798.6 1041.1,798.6 1041.1,802.5 1068.9,802.5 1068.9,806.5 1082.0,806.5 1084.8,800.2 1086.0,798.6 1098.3,798.6 1098.3,794.6 1104.0,794.6 1104.0,798.6 1115.0,798.6 1116.5,794.6 1118.0,798.6 1126.8,798.6 1126.8,802.5 1141.1,802.5 1141.1,798.6 1143.0,802.5 1149.8,802.5 1149.8,806.5 1153.0,806.5 1156.2,797.0 1160.0,792.0 1163.3,778.7 1166.5,769.2 1172.9,769.2 1176.8,780.3 1179.0,792.0 1180.8,806.5 1182.4,827.9 1184.0,870.0 1185.6,921.6 1187.1,1016.0 1188.7,1040.0"/>
<polyline points="1502.3,1040.0 1503.2,1001.7 1505.0,947.9 1507.5,889.4 1509.3,828.2 1511.2,792.0 1513.4,783.6 1517.1,779.0 1519.9,782.7 1525.5,782.7 1529.2,790.1 1539.4,790.1 1545.9,786.4 1549.6,790.1 1567.0,790.1 1572.8,798.5 1584.0,798.5 1586.7,794.8 1595.0,794.8 1596.9,790.1 1606.0,790.1 1608.1,794.8 1613.0,794.8 1615.5,798.5 1618.0,794.8 1621.0,794.8 1623.0,798.5 1624.8,794.8 1631.0,794.8 1633.1,790.1 1639.0,790.1 1641.5,794.8 1673.0,794.8 1674.9,790.1 1680.0,790.1 1684.2,786.4 1688.0,790.1 1691.0,794.8 1693.4,798.5 1702.0,798.5 1704.6,794.8 1718.0,794.8 1721.3,790.1 1733.0,790.1 1736.1,794.8 1753.0,794.8 1755.6,798.5 1768.0,798.5 1770.5,794.8 1776.0,794.8 1778.8,790.1 1790.0,790.1 1793.7,786.4 1798.3,786.4 1801.1,793.8 1803.9,804.0 1805.7,826.3 1808.5,863.4 1811.3,947.9 1813.2,1031.4 1815.0,1040.0"/>
</g>
<rect x="984.0" y="1235.8" width="38.0" height="2.4" fill="#00f0ff"/>
<rect x="1024.3" y="1235.8" width="105.7" height="2.4" fill="#00f0ff"/>
<rect x="1133.9" y="1237.6" width="28.2" height="2.4" fill="#00f0ff"/>
<rect x="1164.0" y="1231.7" width="9.8" height="2.4" fill="#00f0ff"/>
<rect x="1176.0" y="1205.8" width="4.0" height="2.4" fill="#00f0ff"/>
<rect x="1504.0" y="1237.8" width="110.0" height="2.4" fill="#00f0ff"/>
<rect x="1625.8" y="1235.8" width="178.4" height="2.4" fill="#00f0ff"/>
<clipPath id="clipElev"><polygon points="984.0,1513.9 990.0,1511.5 996.4,1509.3 1009.5,1504.4 1011.9,1500.3 1019.3,1496.2 1029.1,1491.3 1042.2,1481.5 1060.2,1471.7 1071.7,1465.1 1086.4,1457.7 1099.5,1449.6 1115.8,1439.7 1127.3,1434.0 1140.4,1428.3 1150.2,1422.9 1160.0,1420.1 1166.6,1418.0 1174.8,1416.8 1182.9,1418.5 1192.8,1422.6 1204.2,1431.6 1214.0,1439.7 1232.0,1452.0 1245.1,1458.6 1257.5,1466.5 1283.7,1483.9 1308.1,1495.3 1320.0,1497.0 1335.2,1509.3 1350.0,1516.0 1367.5,1532.0 1380.0,1533.0 1399.0,1546.8 1418.2,1556.4 1442.6,1566.0 1454.8,1572.1 1470.6,1575.6 1488.0,1575.6 1502.0,1566.9 1505.5,1562.5 1510.7,1559.9 1521.2,1559.9 1533.4,1550.3 1547.4,1544.2 1558.9,1538.0 1594.2,1520.3 1634.3,1500.3 1672.0,1476.7 1712.1,1455.5 1752.2,1433.1 1775.8,1421.3 1791.1,1416.5 1805.3,1416.5 1824.1,1428.3 1844.2,1443.7 1874.8,1462.5 1907.8,1482.6 1945.6,1502.6 1972.0,1514.4 1972.0,1702.0 984.0,1702.0"/></clipPath>
<g clip-path="url(#clipElev)">
<rect x="984.0" y="1400" width="12.0" height="310" fill="#8000ff"/>
<rect x="996.0" y="1400" width="14.0" height="310" fill="#804000"/>
<rect x="1010.0" y="1400" width="134.2" height="310" fill="#8000ff"/>
<rect x="1144.2" y="1400" width="15.8" height="310" fill="#804000"/>
<rect x="1160.0" y="1400" width="4.1" height="310" fill="#8000ff"/>
<rect x="1164.1" y="1400" width="18.0" height="310" fill="#804000"/>
<rect x="1182.1" y="1400" width="3.8" height="310" fill="#d50000"/>
<rect x="1185.9" y="1400" width="6.1" height="310" fill="#ff8000"/>
<rect x="1192.0" y="1400" width="310.0" height="310" fill="#d50000"/>
<rect x="1502.0" y="1400" width="303.7" height="310" fill="#804000"/>
<rect x="1805.7" y="1400" width="4.3" height="310" fill="#d50000"/>
<rect x="1810.0" y="1400" width="14.1" height="310" fill="#ff8000"/>
<rect x="1824.1" y="1400" width="147.9" height="310" fill="#d50000"/>
</g>
<rect x="984.0" y="1701.6" width="198.0" height="2" fill="#d50000"/>
<rect x="1192.0" y="1701.6" width="308.0" height="2" fill="#8000ff"/>
<rect x="1500.0" y="1701.6" width="306.0" height="2" fill="#d50000"/>
<rect x="1824.0" y="1701.6" width="148.0" height="2" fill="#8000ff"/>
<g shape-rendering="auto" font-size="22" font-weight="bold">
<text x="989" y="1407.5" fill="#8000ff" textLength="145" lengthAdjust="spacingAndGlyphs">Out of Saddle</text>
<text x="1141" y="1407.5" fill="#ff8000" textLength="94" lengthAdjust="spacingAndGlyphs">Coasting</text>
<text x="1243" y="1407.5" fill="#d00010" textLength="78" lengthAdjust="spacingAndGlyphs">Braking</text>
</g>
<polygon points="984.0,1880.5 984.0,1808.1 987.9,1804.1 1001.0,1804.1 1003.8,1798.6 1007.0,1796.2 1012.0,1796.2 1016.5,1801.0 1022.9,1798.6 1026.0,1800.0 1036.3,1798.6 1042.0,1800.0 1048.3,1801.7 1054.0,1801.0 1057.8,1798.6 1062.0,1801.5 1068.0,1801.0 1074.4,1792.2 1080.0,1792.8 1089.5,1801.0 1100.0,1800.5 1107.0,1798.6 1112.0,1800.0 1118.1,1804.1 1123.0,1805.5 1130.8,1801.0 1141.9,1801.0 1149.8,1809.7 1156.2,1812.1 1168.1,1817.6 1172.0,1816.0 1179.2,1816.0 1181.6,1821.6 1184.0,1827.9 1186.3,1833.5 1187.9,1851.7 1190.3,1872.4 1191.9,1880.5 1191.9,1912.1 1196.7,1921.6 1199.8,1929.5 1202.2,1933.5 1223.7,1934.3 1232.4,1939.0 1241.9,1943.0 1251.8,1945.0 1261.6,1948.9 1277.3,1948.0 1297.0,1949.9 1328.4,1949.9 1342.2,1944.0 1355.9,1940.1 1362.0,1941.0 1373.6,1943.0 1401.1,1943.0 1409.0,1940.1 1425.7,1938.1 1438.5,1936.2 1454.2,1937.1 1464.0,1941.1 1475.8,1953.8 1485.6,1958.7 1493.5,1963.7 1499.4,1969.6 1502.3,1953.8 1505.3,1930.3 1508.2,1908.6 1512.2,1880.5 1512.2,1866.4 1514.1,1853.6 1517.1,1843.8 1519.0,1837.9 1523.0,1832.0 1528.9,1826.1 1534.8,1824.1 1542.6,1826.1 1548.5,1830.0 1556.4,1833.0 1564.2,1831.0 1572.1,1825.1 1583.9,1825.1 1593.9,1825.9 1612.1,1822.7 1620.7,1820.6 1627.1,1818.4 1633.5,1821.6 1644.2,1819.5 1669.9,1818.4 1684.9,1820.6 1693.4,1816.3 1700.9,1815.2 1712.7,1817.4 1766.2,1817.4 1774.7,1824.9 1780.1,1831.3 1796.1,1830.2 1804.7,1833.4 1807.9,1842.0 1811.1,1852.7 1813.3,1867.7 1814.3,1880.5 1815.4,1897.6 1817.5,1914.7 1822.9,1929.7 1832.5,1939.3 1842.1,1938.3 1853.9,1936.1 1864.6,1939.3 1879.6,1946.8 1890.3,1951.1 1913.8,1951.1 1926.7,1945.8 1939.5,1943.6 1972.0,1943.6 1972.0,1880.5" fill="#ff0000" clip-path="url(#clip5)" shape-rendering="auto"/>
<rect x="856" y="2052" width="1116" height="32" fill="#000"/>
<rect x="858" y="2054" width="28" height="28" fill="url(#gArrowBtn)"/>
<rect x="860" y="2055" width="24" height="2" fill="#d4d4d4"/>
<rect x="858" y="2080" width="28" height="2" fill="#8a8a8a"/>
<polygon points="868,2067 877.7,2060 877.7,2074" fill="#111" shape-rendering="auto"/>
<rect x="864" y="2066" width="5" height="2" fill="#111"/>
<rect x="888" y="2054" width="1036" height="28" fill="url(#dots)"/>
<rect x="1924" y="2054" width="48" height="28" fill="#b4b4b4"/>
<rect x="1924" y="2054" width="48" height="2" fill="#e8e8e8"/>
<rect x="1924" y="2054" width="2" height="28" fill="#e8e8e8"/>
<rect x="1926" y="2080" width="46" height="2" fill="#666"/>
<rect x="983.8" y="2092" width="2" height="10" fill="#000"/>
<rect x="1081.7" y="2092" width="2" height="10" fill="#000"/>
<rect x="1185.8" y="2092" width="2" height="10" fill="#000"/>
<rect x="1287.9" y="2092" width="2" height="10" fill="#000"/>
<rect x="1391.8" y="2092" width="2" height="10" fill="#000"/>
<rect x="1493.8" y="2092" width="2" height="10" fill="#000"/>
<rect x="1597.5" y="2092" width="2" height="10" fill="#000"/>
<rect x="1699.9" y="2092" width="2" height="10" fill="#000"/>
<rect x="1803.9" y="2092" width="2" height="10" fill="#000"/>
<rect x="1905.9" y="2092" width="2" height="10" fill="#000"/>
<g shape-rendering="auto" fill="#000">
<text x="0" y="0" font-size="22" text-anchor="middle" transform="translate(984.8 2124.2) scale(1.1 1)">3.21</text>
<text x="0" y="0" font-size="22" text-anchor="middle" transform="translate(1082.7 2124.2) scale(1.1 1)">3.4</text>
<text x="0" y="0" font-size="22" text-anchor="middle" transform="translate(1186.8 2124.2) scale(1.1 1)">3.6</text>
<text x="0" y="0" font-size="22" text-anchor="middle" transform="translate(1288.9 2124.2) scale(1.1 1)">3.8</text>
<text x="0" y="0" font-size="22" text-anchor="middle" transform="translate(1392.8 2124.2) scale(1.1 1)">4</text>
<text x="0" y="0" font-size="22" text-anchor="middle" transform="translate(1494.8 2124.2) scale(1.1 1)">4.2</text>
<text x="0" y="0" font-size="22" text-anchor="middle" transform="translate(1598.5 2124.2) scale(1.1 1)">4.4</text>
<text x="0" y="0" font-size="22" text-anchor="middle" transform="translate(1700.9 2124.2) scale(1.1 1)">4.6</text>
<text x="0" y="0" font-size="22" text-anchor="middle" transform="translate(1804.9 2124.2) scale(1.1 1)">4.8</text>
<text x="0" y="0" font-size="22" text-anchor="middle" transform="translate(1906.9 2124.2) scale(1.1 1)">5</text>
</g>
</svg>
</body></html>
